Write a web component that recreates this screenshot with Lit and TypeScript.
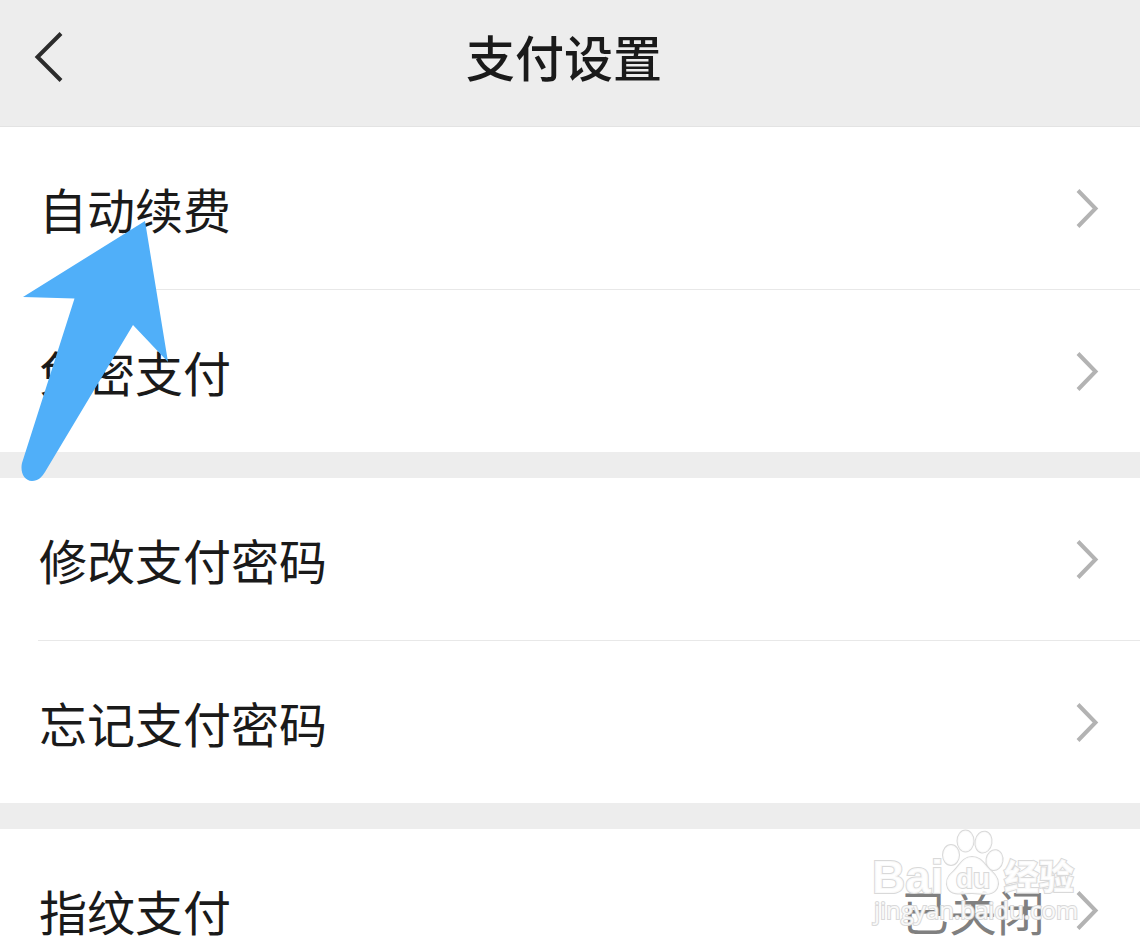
import { LitElement, html, css, nothing } from "lit";
import { customElement } from "lit/decorators.js";

interface Item {
  label: string;
  value?: string;
}

const groups: Item[][] = [
  [{ label: "自动续费" }, { label: "免密支付" }],
  [{ label: "修改支付密码" }, { label: "忘记支付密码" }],
  [{ label: "指纹支付", value: "已关闭" }],
];

@customElement("app-root")
export class AppRoot extends LitElement {
  static styles = css`
    :host {
      display: block;
      position: relative;
      height: 100vh;
      overflow-x: hidden;
      overflow-y: auto;
      scrollbar-width: none;
      background: #ededed;
      color: #1a1a1a;
      font-family: "Noto Sans CJK SC", "Noto Sans", sans-serif;
    }
    .bar {
      display: grid;
      grid-template-columns: 92px 1fr 104px;
      align-items: center;
      box-sizing: border-box;
      height: 127px;
      padding-bottom: 12px;
      border-bottom: 1px solid #e3e3e3;
    }
    .back {
      display: flex;
      width: 64px;
      margin-left: 32px;
      padding: 0;
      border: 0;
      background: none;
      cursor: pointer;
    }
    .title {
      margin: 0;
      padding-bottom: 2px;
      font-size: 49px;
      line-height: 72px;
      font-weight: 500;
      text-align: center;
    }
    .groups {
      display: flex;
      flex-direction: column;
      gap: 26px;
    }
    .group {
      position: relative;
      margin: 0;
      padding: 0;
      list-style: none;
      background: #fff;
    }
    .item + .item {
      margin-left: 38px;
      border-top: 1px solid #e8e8e8;
    }
    .item + .item .row {
      padding-left: 1px;
    }
    .row {
      display: flex;
      align-items: center;
      box-sizing: border-box;
      width: 100%;
      height: 162px;
      padding: 0 41px 0 39px;
      border: 0;
      background: none;
      color: inherit;
      font: inherit;
      font-size: 48px;
      line-height: 72px;
      text-align: left;
      cursor: pointer;
    }
    .label {
      flex: 1;
    }
    .value {
      padding-right: 30px;
      color: #808080;
    }
    .chevron {
      display: block;
    }
    .pointer {
      position: absolute;
      left: 20px;
      top: 220px;
      pointer-events: none;
    }
    .watermark {
      position: absolute;
      right: 54px;
      top: 0;
      pointer-events: none;
    }
    .mark {
      fill: #fff;
      fill-opacity: 0.85;
      stroke: #d9d9d9;
      stroke-width: 2px;
      paint-order: stroke;
    }
    .latin {
      font: 700 46px "Liberation Sans", Arial, sans-serif;
    }
    .du {
      font: 700 28px "Liberation Sans", Arial, sans-serif;
    }
    .han {
      font: 900 35px "Noto Sans CJK SC", sans-serif;
    }
    .site {
      font: 400 24px "Open Sans", sans-serif;
    }
  `;

  private renderItem(item: Item) {
    return html`<li class="item">
      <button class="row" type="button">
        <span class="label">${item.label}</span>
        ${item.value ? html`<span class="value">${item.value}</span>` : nothing}
        <svg class="chevron" width="24" height="42" viewBox="0 0 24 42" fill="none" stroke="#b3b3b3" stroke-width="4" aria-hidden="true">
          <path d="M3 3.500L20.500 21.500L3 39.500" />
        </svg>
      </button>
    </li>`;
  }

  private renderWatermark() {
    return html`<svg class="watermark" width="220" height="110" viewBox="0 0 220 110">
      <g class="mark">
        <ellipse cx="85" cy="26" rx="8" ry="10" />
        <ellipse cx="99.500" cy="12" rx="8" ry="10.500" />
        <ellipse cx="117.500" cy="13" rx="8" ry="10.500" transform="rotate(10 117 13)" />
        <ellipse cx="128.500" cy="31" rx="8" ry="10" transform="rotate(10 128 31)" />
        <path d="M106 28C97 28 94 36 88 42C82 47 79 52 82 59C86 67 97 64 106 64C115 64 126 68 131 59C134 52 130 46 124 41C118 35 115 28 106 28Z" />
        <text class="latin" x="6" y="64">Bai</text>
        <text class="du" x="90" y="59">du</text>
        <text class="han" x="138" y="61">经验</text>
        <text class="site" x="8" y="90">jingyan.baidu.com</text>
      </g>
    </svg>`;
  }

  render() {
    return html`
      <header class="bar">
        <button class="back" type="button" aria-label="返回">
          <svg width="34" height="54" viewBox="0 0 34 54" fill="none" stroke="#2b2b2b" stroke-width="4" aria-hidden="true">
            <path d="M29 3.500L5.500 27L29 50.500" />
          </svg>
        </button>
        <h1 class="title">支付设置</h1>
      </header>
      <main class="groups">
        ${groups.map(
          (items, i) => html`<ul class="group">
            ${items.map((item) => this.renderItem(item))}
            ${i === groups.length - 1 ? this.renderWatermark() : nothing}
          </ul>`
        )}
      </main>
      <svg class="pointer" width="150" height="264" viewBox="20 220 150 264" aria-hidden="true">
        <path fill="#50aff9" d="M145 221L23 297L74.500 298.500L22 463C20 472 24 481 32 481C38 481 42 477 45 472L133 325L168 362Z" />
      </svg>
    `;
  }
}
